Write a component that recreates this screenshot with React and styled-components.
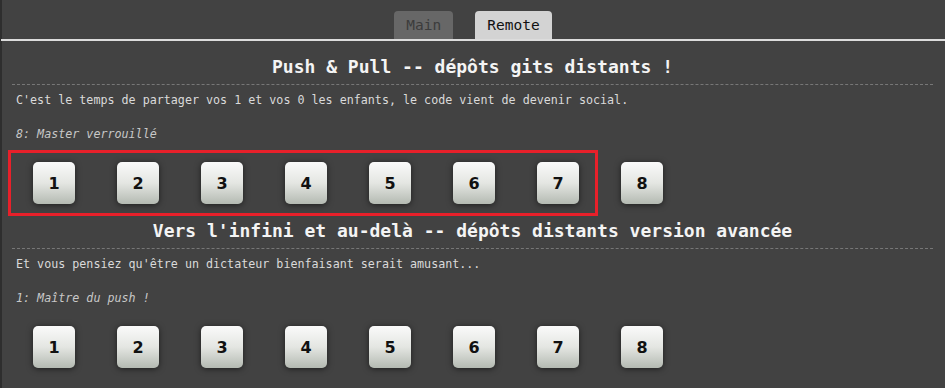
import React from "react";
import styled, { createGlobalStyle } from "styled-components";

const GlobalStyle = createGlobalStyle`
  body {
    margin: 0;
    background: #424242;
    font-family: "DejaVu Sans Mono", "Liberation Mono", monospace;
  }
`;

const Page = styled.div`
  position: relative;
  min-height: 388px;
  border-left: 2px solid #2e2e2e;
  box-sizing: border-box;
`;

const TabBar = styled.div`
  display: flex;
  justify-content: center;
  gap: 22px;
  padding-top: 11px;
  border-bottom: 2px solid #dcdcdc;
  margin-left: -1px;
`;

const Tab = styled.div`
  height: 28px;
  padding: 0 12px;
  display: flex;
  align-items: center;
  border-radius: 4px 4px 0 0;
  font-size: 14.5px;
  background: ${(props) => (props.active ? "#d3d3d3" : "#676767")};
  color: ${(props) => (props.active ? "#111" : "#3c3c3c")};
`;

const Panel = styled.div`
  padding: 15px 12px 0 10px;
`;

const Section = styled.div`
  margin-bottom: 16px;
`;

const Title = styled.h2`
  margin: 0;
  padding-bottom: 6px;
  border-bottom: 1px dashed #777;
  text-align: center;
  font-size: 18px;
  line-height: 22px;
  font-weight: bold;
  color: #f4f4f4;
`;

const Desc = styled.p`
  margin: 7px 0 0;
  padding-left: 4px;
  font-size: 11.7px;
  line-height: 16px;
  color: ${(props) => (props.italic ? "#c8c8c8" : "#dadada")};
  font-style: ${(props) => (props.italic ? "italic" : "normal")};
  margin-top: ${(props) => (props.italic ? "17.5px" : "7px")};
`;

const Levels = styled.div`
  display: flex;
  margin-top: 20.5px;
`;

const Level = styled.div`
  width: 42px;
  height: 42px;
  margin: 0 21px;
  box-sizing: border-box;
  border-radius: 5px;
  background: linear-gradient(to bottom, #fafafa 0%, #e4e6e2 50%, #b4bab2 100%);
  box-shadow: 0 1px 6px rgba(0, 0, 0, 0.55);
  display: flex;
  align-items: center;
  justify-content: center;
  font-family: "DejaVu Sans", Verdana, sans-serif;
  font-weight: bold;
  font-size: 16px;
  color: #111;
`;

const Highlight = styled.div`
  position: absolute;
  left: 6px;
  top: 150px;
  width: 590px;
  height: 66px;
  box-sizing: border-box;
  border: 3px solid #e8202a;
  pointer-events: none;
`;

const sections = [
  {
    title: "Push & Pull -- dépôts gits distants !",
    desc: "C'est le temps de partager vos 1 et vos 0 les enfants, le code vient de devenir social.",
    current: "8: Master verrouillé",
  },
  {
    title: "Vers l'infini et au-delà -- dépôts distants version avancée",
    desc: "Et vous pensiez qu'être un dictateur bienfaisant serait amusant...",
    current: "1: Maître du push !",
  },
];

const App = () => {
  return (
    <Page>
      <GlobalStyle />
      <TabBar>
        <Tab>Main</Tab>
        <Tab active>Remote</Tab>
      </TabBar>
      <Panel>
        {sections.map((s) => (
          <Section key={s.title}>
            <Title>{s.title}</Title>
            <Desc>{s.desc}</Desc>
            <Desc italic>{s.current}</Desc>
            <Levels>
              {[1, 2, 3, 4, 5, 6, 7, 8].map((n) => (
                <Level key={n}>{n}</Level>
              ))}
            </Levels>
          </Section>
        ))}
      </Panel>
      <Highlight />
    </Page>
  );
};

export default App;
